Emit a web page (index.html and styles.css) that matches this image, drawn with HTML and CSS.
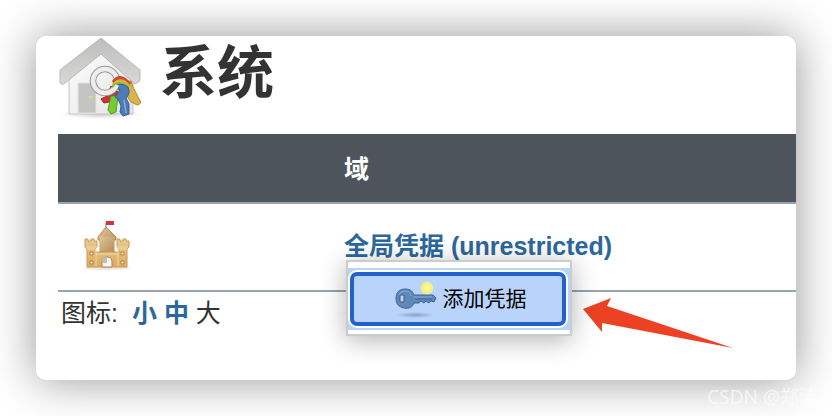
FILE: index.html
```html
<!DOCTYPE html>
<html lang="zh-CN">
<head>
<meta charset="utf-8">
<title>系统</title>
<link rel="stylesheet" href="styles.css">
</head>
<body>
<main class="card">
  <header class="heading">
    <svg class="heading-icon" viewBox="0 0 84 84" aria-hidden="true">
      <defs>
        <linearGradient id="roof" x1="0" y1="0" x2="0" y2="1"><stop offset="0" stop-color="#bdbdbb"/><stop offset="1" stop-color="#d8d8d6"/></linearGradient>
        <linearGradient id="wall" x1="0" y1="0" x2="1" y2="1"><stop offset="0" stop-color="#fdfdfd"/><stop offset="1" stop-color="#e4e4e4"/></linearGradient>
        <radialGradient id="ground"><stop offset="0" stop-color="#000" stop-opacity=".2"/><stop offset="1" stop-color="#000" stop-opacity="0"/></radialGradient>
      </defs>
      <ellipse cx="43" cy="78" rx="41" ry="5" fill="url(#ground)"/>
      <path d="M11 39 43 15 75 42V78H11Z" fill="url(#wall)" stroke="#c3c3c1"/>
      <path d="M20 47H38V77H20Z" fill="#c4c4c2" stroke="#e3e3e2"/>
      <ellipse cx="33" cy="61" rx="2.5" ry="1.5" fill="#e4d67c"/>
      <path d="M43 2 2 34V46Q3 50 7 47L43 18 77 48Q82 46 82 43V34Z" fill="url(#roof)" stroke="#b8b8b6" stroke-linejoin="round"/>
      <path d="M53 50 61 57 51 66 46 67 43 63 49 60Z" fill="#c93430" stroke="#a62320"/>
      <path d="M60 47 73 45 75 51 81 63Q85 68 79 69L73 66 64 53Z" fill="#d9b44a" stroke="#a98b33"/>
      <circle cx="47" cy="45" r="12" fill="none" stroke="#9a9a9a" stroke-width="6.5"/>
      <circle cx="47" cy="45" r="12" fill="none" stroke="#ededed" stroke-width="4.5"/>
      <path d="M54 45Q62 34 73 47L70 52 56 49Z" fill="#ce4732"/>
      <path d="M54 48Q63 38 72 49L68 55 55 51Z" fill="#d5b33e"/>
      <path d="M54 50Q62 42 70 51L65 56 55 53Z" fill="#76bd32"/>
      <path d="M53 60 60 60 58 76 53 78 50 74Z" fill="#76cb32" stroke="#4d9a2c"/>
      <path d="M55 54Q61 44 70 51Q73 57 68 62L71 68 71 78 65 80 62 76 63 70 60 63 57 61 62 54 59 52 56 56Z" fill="#4c7db9" stroke="#345f9b"/>
      <path d="m66 64 2 13" stroke="#86abd7" stroke-width="1.5"/>
      <path d="M48 57Q57 56 59 49" fill="none" stroke="#ededed" stroke-width="4"/>
    </svg>
    <h1>系统</h1>
  </header>
  <table class="domains">
    <thead>
      <tr><th class="icon-column"></th><th>域</th></tr>
    </thead>
    <tbody>
      <tr>
        <td class="icon-column">
          <svg class="castle" viewBox="0 0 50 52" aria-hidden="true">
            <defs><linearGradient id="stone" x1="0" y1="0" x2="0" y2="1"><stop offset="0" stop-color="#e9c98f"/><stop offset="1" stop-color="#dbac61"/></linearGradient><linearGradient id="tower" x1="0" y1="0" x2="1" y2="1"><stop offset="0" stop-color="#dcc398"/><stop offset="1" stop-color="#b98f58"/></linearGradient></defs>
            <ellipse cx="25" cy="48" rx="23" ry="2" fill="#eee9e2"/>
            <path d="M24 8V3" stroke="#886648"/>
            <path d="M24 1H32V5H24Z" fill="#cf3640"/>
            <path d="M24 7 16 17V20H18V32H32V20H34V17Z" fill="url(#tower)" stroke="#b98c52"/>
            <path d="M3 19H6V21H9V19H12V21H15V27L13 29V32H37V29L35 27V19H38V21H41V19H44V21H47V27L45 29V47H5V29L3 27Z" fill="url(#stone)" stroke="#cb9a52"/>
            <path d="M18 17H32V31H18Z" fill="url(#tower)"/>
            <path d="M5 29H15M35 29H45M14 30V46M36 30V46M14 34H36M4 27H15M35 27H46" stroke="#f0d8ad" fill="none"/>
            <path d="M20 47V42Q20 37 25 37T30 42V47Z" fill="#f9f8f5" stroke="#b0813f"/>
            <path d="M20 42Q20 37 25 37V43H20Z" fill="#bec0bd"/>
            <g fill="#f7efdf" stroke="#b0813f"><path d="M8 32h3v3H8ZM39 32h3v3h-3ZM8 41h3v3H8ZM39 41h3v3h-3Z"/></g>
          </svg>
        </td>
        <td class="domain-cell">
          <a class="domain-link" href="#global">全局凭据 (unrestricted)</a>
          <div class="menu">
            <div class="menu-item">
              <button class="add-button" type="button">
                <svg class="key" viewBox="0 0 44 40" aria-hidden="true">
                  <defs><radialGradient id="glow"><stop offset="0" stop-color="#fffde0"/><stop offset=".5" stop-color="#fff36d"/><stop offset=".8" stop-color="#eeee87"/><stop offset="1" stop-color="#eeee87" stop-opacity="0"/></radialGradient><radialGradient id="shade"><stop offset="0" stop-color="#6c85a9" stop-opacity=".65"/><stop offset="1" stop-color="#6c85a9" stop-opacity="0"/></radialGradient></defs>
                  <ellipse cx="21" cy="36" rx="19" ry="3" fill="url(#shade)"/>
                  <path d="M11 10C17 10 19 13 20 16H39L42 19 40 23 37 22 35 24 32 22 30 24 27 22 25 24H20C19 28 15 30 10 29 4 28 2 24 2 19S5 10 11 10Z" fill="#5f88b9" stroke="#3e659c"/>
                  <path d="M5 16Q6 12 11 12 16 12 17 17M20 18H38" fill="none" stroke="#85a8d2"/>
                  <path d="M21 20H38" stroke="#426899"/>
                  <rect x="6" y="16" width="4" height="7" rx="1" fill="#bdd3ef" stroke="#3b567d"/>
                  <circle cx="33" cy="9" r="7" fill="url(#glow)"/>
                </svg>
                <span>添加凭据</span>
              </button>
            </div>
          </div>
        </td>
      </tr>
    </tbody>
  </table>
  <nav class="sizes">图标: <span class="size-options"><a href="#small">小</a> <a href="#medium">中</a> 大</span></nav>
  <svg class="arrow" viewBox="0 0 150 52" aria-hidden="true"><path d="M0 13 28 2 24 10 150 52 19 27V36Z" fill="#ed4124"/></svg>
</main>
<div class="watermark">CSDN @郑清</div>
</body>
</html>
```
FILE: styles.css
```css
* { box-sizing: border-box; }

body {
  margin: 0;
  padding: 36px;
  min-height: 100vh;
  background: #fff;
  color: #333;
  font-family: "Liberation Sans", "Noto Sans CJK SC", sans-serif;
  font-size: 25px;
  line-height: 36px;
  overflow: hidden;
}

a { color: #2c689c; font-weight: bold; text-decoration: none; }

.card {
  position: relative;
  min-height: calc(100vh - 72px);
  padding-left: 22px;
  border-radius: 10px;
  background: #fff;
  box-shadow: 0 0 46px rgba(0, 0, 0, .42);
}

.heading {
  display: flex;
  align-items: flex-start;
  gap: 18px;
  height: 98px;
}

.heading-icon { width: 84px; height: 84px; }

h1 {
  margin: 0;
  font-size: 57px;
  line-height: 74px;
}

.domains {
  width: 100%;
  border-collapse: separate;
  border-spacing: 0;
}

.domains th,
.domains td {
  padding: 0;
  border-bottom: 2px solid #98a4ae;
  text-align: left;
}

.domains th {
  height: 70px;
  padding-top: 2px;
  background: #4d545c;
  color: #fff;
}

.domains td { height: 88px; padding-bottom: 2px; }

.domains .icon-column { width: 286px; padding-left: 24px; }

.castle { display: block; width: 50px; height: 52px; }

.domain-cell { position: relative; }

.menu {
  position: absolute;
  top: 56px;
  left: 2px;
  z-index: 1;
  width: 226px;
  padding: 6px 0 4px;
  border: 2px solid #ccc;
  background: #fff;
  box-shadow: 0 4px 24px rgba(0, 0, 0, .3);
}

.menu-item { padding: 4px 4px 4px 2px; background: #b8d4fb; }

.add-button {
  display: flex;
  align-items: center;
  justify-content: center;
  gap: 5px;
  width: 100%;
  height: 54px;
  padding: 0 0 0 4px;
  border: 4px solid #2361cb;
  border-radius: 7px;
  background: #b8d4fb;
  box-shadow: 0 0 0 2px #fff;
  color: #000;
  font-family: inherit;
  font-size: 21px;
  line-height: 32px;
}

.key { width: 44px; height: 40px; }

.sizes { padding: 3px; }

.size-options { margin-left: 7px; }

.arrow {
  position: absolute;
  top: 260px;
  left: 547px;
  width: 150px;
  height: 52px;
}

.watermark {
  position: absolute;
  right: 14px;
  bottom: 7px;
  color: rgba(255, 255, 255, .65);
  font-family: "Noto Sans", "Noto Sans CJK SC", sans-serif;
  font-size: 19px;
  line-height: 24px;
}
```
